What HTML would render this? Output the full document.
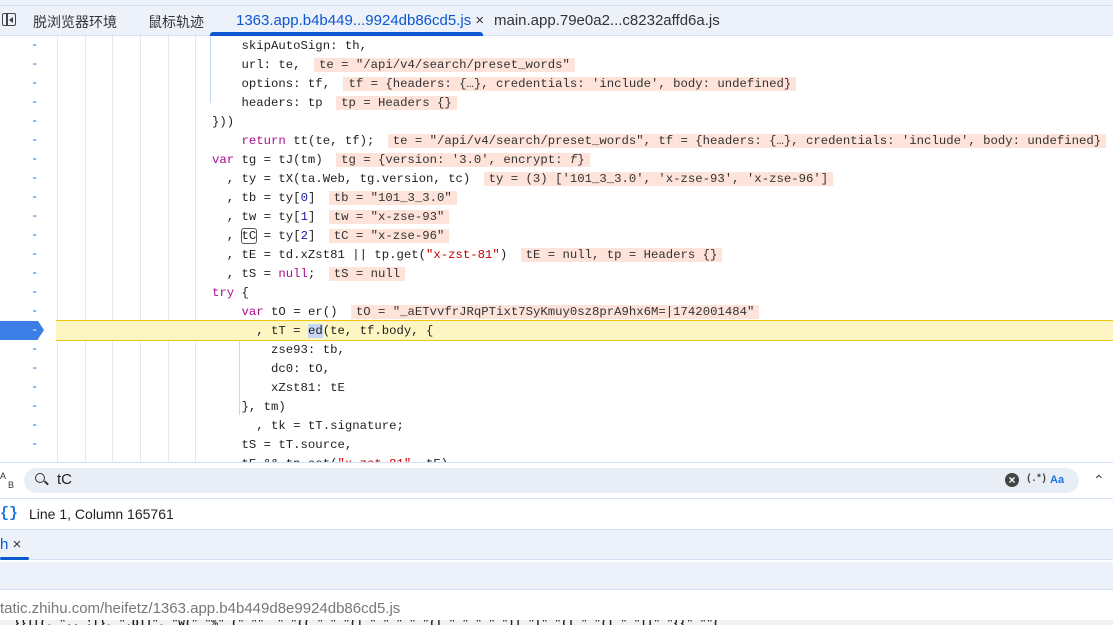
<!DOCTYPE html><html><head><meta charset="utf-8"><style>
*{margin:0;padding:0;box-sizing:border-box}
body{width:1113px;height:625px;overflow:hidden;background:#fff;font-family:"Liberation Sans","Noto Sans CJK SC",sans-serif;position:relative}
.abs{position:absolute}
.tabs{left:0;width:1113px;background:#edf2fa;border-top:1px solid #d3e0f5;border-bottom:1px solid #d3e0f5;top:5px;height:31px}
.tab{position:absolute;top:6px;font-size:14px;color:#333}
.code{left:0;top:36px;width:1113px;height:426px;overflow:hidden}
.ln{position:absolute;left:0;width:1113px;height:19px;font:12.3px/19px "Liberation Mono",monospace;color:#1f1f1f;white-space:pre}
.ln .n{position:absolute;left:31px;color:#1a73e8}
.ln .c{position:absolute;left:212px;top:1px}
.g{position:absolute;top:0;width:1px;height:426px;background:#e3e8f0}
.k{color:#aa0d91}.s{color:#c80000}.d{color:#1a1aa6}
.b{background:#fde3d9;color:#333;padding:0 5px;margin-left:6px}
</style></head><body>
<div class="abs tabs"></div>
<div class="abs" style="left:0;top:0;width:1113px;height:5px;background:#edf2fa"></div>
<div class="abs" style="left:2px;top:13px;width:14px;height:13px;border:1.5px solid #444;border-radius:2px"></div>
<div class="abs" style="left:6px;top:13px;width:1.5px;height:13px;background:#444"></div>
<div class="abs" style="left:9px;top:17px;border-right:4px solid #444;border-top:3px solid transparent;border-bottom:3px solid transparent"></div>
<div class="tab" style="left:33px;top:12px">脱浏览器环境</div>
<div class="tab" style="left:148px;top:12px">鼠标轨迹</div>
<div class="tab" style="left:236px;top:12px;color:#0b57d0;font-size:15px">1363.app.b4b449...9924db86cd5.js <span style="color:#333">×</span></div>
<div class="abs" style="left:210px;top:32px;width:273px;height:4px;background:#0b57d0;border-radius:3px 3px 0 0"></div>
<div class="tab" style="left:494px;top:12px;font-size:15px">main.app.79e0a2...c8232affd6a.js</div>
<div class="abs code">
<div class="g" style="left:57px"></div><div class="g" style="left:85px"></div><div class="g" style="left:112px"></div><div class="g" style="left:140px"></div><div class="g" style="left:168px"></div><div class="g" style="left:195px"></div>
<div class="g" style="left:210px;height:67px;background:#c9d7f0"></div>
<div class="g" style="left:239px;top:303px;height:76px;background:#c9d7f0"></div>
<div class="ln" style="top:0"><span class="n">-</span><span class="c">    skipAutoSign: th,</span></div>
<div class="ln" style="top:19px"><span class="n">-</span><span class="c">    url: te, <span class="b">te = "/api/v4/search/preset_words"</span></span></div>
<div class="ln" style="top:38px"><span class="n">-</span><span class="c">    options: tf, <span class="b">tf = {headers: {…}, credentials: 'include', body: undefined}</span></span></div>
<div class="ln" style="top:57px"><span class="n">-</span><span class="c">    headers: tp <span class="b">tp = Headers {}</span></span></div>
<div class="ln" style="top:76px"><span class="n">-</span><span class="c">}))</span></div>
<div class="ln" style="top:95px"><span class="n">-</span><span class="c">    <span class="k">return</span> tt(te, tf); <span class="b">te = "/api/v4/search/preset_words", tf = {headers: {…}, credentials: 'include', body: undefined}</span></span></div>
<div class="ln" style="top:114px"><span class="n">-</span><span class="c"><span class="k">var</span> tg = tJ(tm) <span class="b">tg = {version: '3.0', encrypt: <i>f</i>}</span></span></div>
<div class="ln" style="top:133px"><span class="n">-</span><span class="c">  , ty = tX(ta.Web, tg.version, tc) <span class="b">ty = (3) ['101_3_3.0', 'x-zse-93', 'x-zse-96']</span></span></div>
<div class="ln" style="top:152px"><span class="n">-</span><span class="c">  , tb = ty[<span class="d">0</span>] <span class="b">tb = "101_3_3.0"</span></span></div>
<div class="ln" style="top:171px"><span class="n">-</span><span class="c">  , tw = ty[<span class="d">1</span>] <span class="b">tw = "x-zse-93"</span></span></div>
<div class="ln" style="top:190px"><span class="n">-</span><span class="c">  , <span style="outline:1px solid #555;border-radius:2px">tC</span> = ty[<span class="d">2</span>] <span class="b">tC = "x-zse-96"</span></span></div>
<div class="ln" style="top:209px"><span class="n">-</span><span class="c">  , tE = td.xZst81 || tp.get(<span class="s">"x-zst-81"</span>) <span class="b">tE = null, tp = Headers {}</span></span></div>
<div class="ln" style="top:228px"><span class="n">-</span><span class="c">  , tS = <span class="k">null</span>; <span class="b">tS = null</span></span></div>
<div class="ln" style="top:247px"><span class="n">-</span><span class="c"><span class="k">try</span> {</span></div>
<div class="ln" style="top:266px"><span class="n">-</span><span class="c">    <span class="k">var</span> tO = er() <span class="b">tO = "_aETvvfrJRqPTixt7SyKmuy0sz8prA9hx6M=|1742001484"</span></span></div>
<div class="abs" style="left:56px;top:284px;width:1057px;height:21px;background:#fef6c2;border-top:1px solid #f3c614;border-bottom:1px solid #f3c614"></div>
<div class="abs" style="left:0;top:285px;width:38px;height:19px;background:#3b7fe6"></div>
<div class="abs" style="left:38px;top:285px;border-left:6px solid #3b7fe6;border-top:9.5px solid transparent;border-bottom:9.5px solid transparent"></div>
<div class="ln" style="top:285px"><span class="n" style="color:#fff">-</span><span class="c">      , tT = <span style="background:#c6d8f5">ed</span>(te, tf.body, {</span></div>
<div class="ln" style="top:304px"><span class="n">-</span><span class="c">        zse93: tb,</span></div>
<div class="ln" style="top:323px"><span class="n">-</span><span class="c">        dc0: tO,</span></div>
<div class="ln" style="top:342px"><span class="n">-</span><span class="c">        xZst81: tE</span></div>
<div class="ln" style="top:361px"><span class="n">-</span><span class="c">    }, tm)</span></div>
<div class="ln" style="top:380px"><span class="n">-</span><span class="c">      , tk = tT.signature;</span></div>
<div class="ln" style="top:399px"><span class="n">-</span><span class="c">    tS = tT.source,</span></div>
<div class="ln" style="top:418px"><span class="n">-</span><span class="c">    tE &amp;&amp; tp.set(<span class="s">"x-zst-81"</span>, tE)</span></div>
</div>
<div class="abs" style="left:0;top:462px;width:1113px;height:1px;background:#d3e0f5"></div>
<div class="abs" style="left:0;top:472px;font:9px 'Liberation Sans';color:#333;line-height:9px">A<br><span style="margin-left:8px">B</span></div>
<div class="abs" style="left:24px;top:468px;width:1055px;height:25px;background:#e9eef6;border-radius:13px"></div>
<div class="abs" style="left:35px;top:473px;width:10px;height:10px;border:1.6px solid #333;border-radius:50%"></div>
<div class="abs" style="left:44px;top:482px;width:5px;height:1.6px;background:#333;transform:rotate(45deg)"></div>
<div class="abs" style="left:57px;top:471px;font-size:15px;color:#222">tC</div>
<div class="abs" style="left:1005px;top:473px;width:14px;height:14px;border-radius:50%;background:#444;color:#fff;font-size:12px;line-height:14px;text-align:center;font-weight:bold">×</div>
<div class="abs" style="left:1026px;top:474px;font:bold 10px 'Liberation Mono';color:#444;letter-spacing:-1px">(.*)</div>
<div class="abs" style="left:1050px;top:474px;font:bold 11px 'Liberation Sans';color:#1a73e8">Aa</div>
<div class="abs" style="left:1093px;top:472px;font-size:14px;color:#444">⌃</div>
<div class="abs" style="left:0;top:498px;width:1113px;height:1px;background:#d3e0f5"></div>
<div class="abs" style="left:0;top:505px;font:bold 15px 'Liberation Mono';color:#1a73e8">{}</div>
<div class="abs" style="left:29px;top:506px;font-size:14px;color:#222">Line 1, Column 165761</div>
<div class="abs" style="left:0;top:529px;width:1113px;height:31px;background:#edf2fa;border-top:1px solid #d3e0f5;border-bottom:1px solid #d3e0f5"></div>
<div class="abs" style="left:0;top:536px;font-size:15px;color:#0b57d0">h <span style="color:#333">×</span></div>
<div class="abs" style="left:0;top:557px;width:29px;height:3px;background:#0b57d0;border-radius:2px"></div>
<div class="abs" style="left:0;top:562px;width:1113px;height:28px;background:#edf2fa;border-bottom:1px solid #d3e0f5"></div>
<div class="abs" style="left:0;top:600px;font-size:15px;color:#777">tatic.zhihu.com/heifetz/1363.app.b4b449d8e9924db86cd5.js</div>
<div class="abs" style="left:0;top:620px;width:1113px;height:5px;background:#f1f1f1;overflow:hidden;font:bold 11px 'Liberation Mono';color:#222;line-height:8px;white-space:pre">  }}]|(, ".. :|}, ".Q]]", "w(" "%" (" ""  " "(( " " "(| " " " " "(| " " " " "|| "|" "(| " "(| " "||" "{{" ""(  </div>
</body></html>
